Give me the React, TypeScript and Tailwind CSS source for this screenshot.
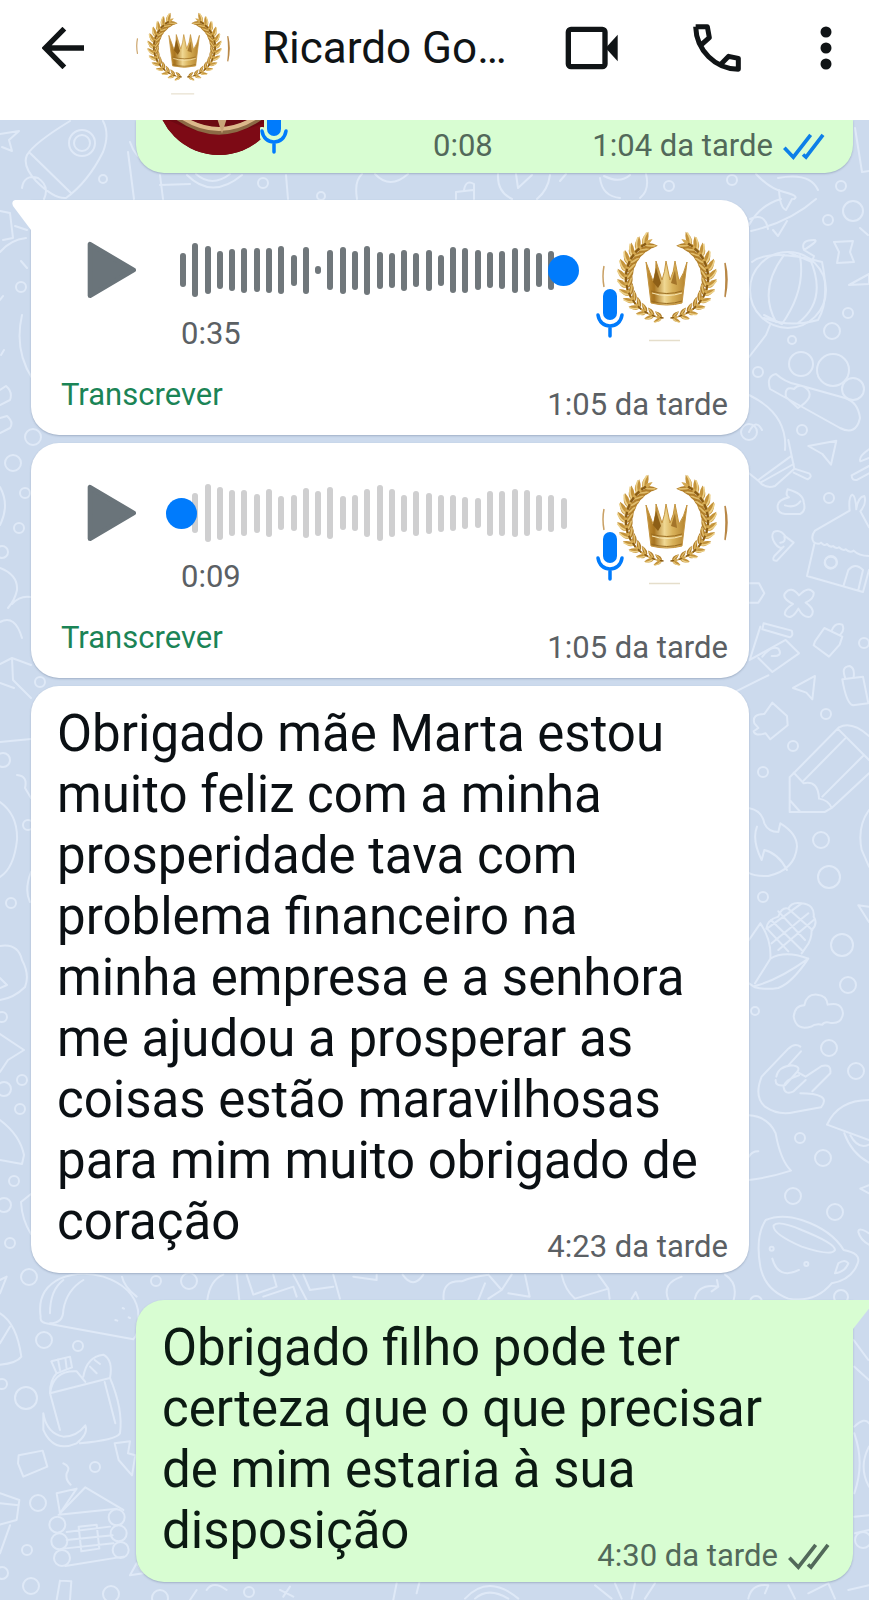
import React, { useId, useState } from "react";

const WAVE_ONE = [
  34, 54, 48, 38, 42, 45, 44, 45, 48, 31, 47, 8, 40, 47, 39, 49, 37, 35, 41, 34, 41, 31, 46, 45, 40,
  36, 38, 45, 44, 34, 39, 12,
];
const WAVE_TWO = [
  12, 40, 58, 53, 46, 46, 39, 48, 34, 36, 50, 45, 52, 34, 36, 48, 56, 48, 37, 45, 41, 37, 36, 32,
  30, 45, 45, 48, 46, 36, 37, 31,
];

// leaves of one wreath half, from the bottom up to the tip
const LEAVES = Array.from({ length: 13 }, (_, i) => {
  const degrees = 98 + i * 11.5;
  const angle = (degrees * Math.PI) / 180;
  return {
    x: 65 + 41 * Math.cos(angle),
    y: 62 + 40 * Math.sin(angle),
    turn: degrees + 90,
    size: 0.75 + Math.min(i, 8) * 0.05,
  };
});

const WreathHalf = () => (
  <g>
    {LEAVES.map((leaf, i) => (
      <g key={i} transform={`translate(${leaf.x} ${leaf.y}) rotate(${leaf.turn}) scale(${leaf.size})`}>
        <path d="M-1 0Q3 -6 12 0Q4 4 -1 0Z" transform="rotate(-38)" fill="#c4933a" />
        <path d="M-1 0Q3 6 12 0Q4 -4 -1 0Z" transform="rotate(38)" fill="#b27f2a" />
        <path d="M0 0Q4 -3 11 -1" transform="rotate(-38)" stroke="#ecd08a" strokeWidth="1.5" fill="none" />
        <path d="M1 0Q4 1 10 0" transform="rotate(38)" stroke="#e0bd6c" strokeWidth="1.5" fill="none" />
        <path d="M-2 0Q3 -3 9 0Q3 3 -2 0Z" fill="#d3a850" />
        <path d="M-3 0L2 0" stroke="#8a5c14" strokeWidth="2" fill="none" />
      </g>
    ))}
  </g>
);

const CrownAvatar = ({ className }: { className: string }) => {
  const id = useId();
  return (
    <svg viewBox="0 0 126 126" className={className} role="img" aria-label="Ricardo">
      <defs>
        <linearGradient id={id} x1="0" x2="1">
          <stop offset="0" stopColor="#c9973c" />
          <stop offset="0.2" stopColor="#a8741f" />
          <stop offset="0.45" stopColor="#f0d893" />
          <stop offset="0.65" stopColor="#d9b25a" />
          <stop offset="1" stopColor="#b17f2b" />
        </linearGradient>
      </defs>
      <circle cx="63" cy="63" r="63" fill="#fff" />
      <path d="M2 50Q0 60 2 71" stroke="#c9a064" strokeWidth="1.5" fill="none" />
      <path d="M123 47Q127 63 123 81Q125 63 123 47Z" stroke="#b88746" strokeWidth="1.5" fill="#b88746" />
      <path d="M47 124.500H78" stroke="#e5decb" strokeWidth="1.5" />
      <WreathHalf />
      <g transform="translate(130 0) scale(-1 1)">
        <WreathHalf />
      </g>
      <path
        d="M44 46L51 65Q54 58 54 45L60 64Q63 56 64 45L68 64Q72 56 73 45L77 65Q82 58 85 46L80 87Q65 91 49 87Z"
        fill={`url(#${id})`}
        stroke="#c3933f"
        strokeWidth="1"
      />
      <path d="M49 75Q65 80 80 75M49 85Q65 90 80 85" stroke="#9a6c20" strokeWidth="1" fill="none" />
      <path d="M50 77Q65 82 80 77" stroke="#f7e6b4" strokeWidth="1" fill="none" />
      <path d="M51 66L54 52L59 67L56 72Z" fill="#8d5f17" />
      <path d="M69 67L73 54L75 69Z" fill="#a4752a" />
    </svg>
  );
};

const RedAvatar = () => (
  <svg viewBox="0 0 126 126" className="h-[126px] w-[126px] shrink-0" aria-hidden="true">
    <defs>
      <clipPath id="red-round">
        <circle cx="63" cy="63" r="63" />
      </clipPath>
    </defs>
    <g clipPath="url(#red-round)">
      <rect width="126" height="126" fill="#6d0912" />
      <path d="M0 84Q63 124 126 84V126H0Z" fill="#7d0a15" />
      <path d="M12 80Q63 124 114 80" stroke="#8c6a45" strokeWidth="7" fill="none" />
      <path d="M12 78Q63 122 114 78" stroke="#dcb98b" strokeWidth="4" fill="none" />
      <path d="M57 70L66 98L75 70" stroke="#c9a578" strokeWidth="4" fill="none" />
    </g>
  </svg>
);

const MicBadge = ({ halo }: { halo: string }) => (
  <svg viewBox="0 0 28 50" className="h-[50px] w-[28px]" fill="none" aria-hidden="true">
    <g stroke={halo} strokeLinecap="round">
      <path d="M14 8V24" strokeWidth="20" />
      <path d="M2 26Q4 38 14 38Q24 38 26 26" strokeWidth="8" />
    </g>
    <rect x="7" y="0" width="14" height="31" rx="7" fill="#007bfc" />
    <path
      d="M2 26C3 33 8 37 14 37C20 37 25 33 26 26M14 37V47"
      stroke="#007bfc"
      strokeWidth="3.500"
      strokeLinecap="round"
    />
  </svg>
);

const Checks = ({ className }: { className: string }) => (
  <svg viewBox="0 0 126 80" className={className} fill="none" stroke="currentColor" strokeWidth="11" aria-hidden="true">
    <path d="M4 44L31 72L83 5M60 64L69 72L120 5" />
  </svg>
);

type VoiceProps = {
  bars: number[];
  duration: string;
  time: string;
  position: number;
  barColor: string;
  tail?: boolean;
};

const VoiceMessage = ({ bars, duration, time, position, barColor, tail }: VoiceProps) => {
  const [value, setValue] = useState(position);
  return (
    <article
      className={`relative ml-[31px] mr-[120px] bg-white pb-3 pl-[30px] pr-[21px] pt-4 shadow-[0_1px_2px_rgba(60,80,110,0.3)] ${
        tail ? "rounded-b-[28px] rounded-tr-[28px]" : "rounded-[28px]"
      }`}
    >
      {tail && (
        <svg viewBox="0 0 20 30" className="absolute -left-[19px] top-0 h-[30px] w-5" aria-hidden="true">
          <path d="M20 0H3Q-1 1 1 6L19 30H20Z" fill="#fff" />
        </svg>
      )}
      <div className="flex items-start">
        <button type="button" aria-label="Reproduzir" className="ml-[26px] mt-[25px] shrink-0">
          <svg viewBox="0 0 148 170" className="h-[58px] w-[50px]" aria-hidden="true">
            <path d="M9 9V161L138 85Z" fill="#6a747a" stroke="#6a747a" strokeWidth="14" strokeLinejoin="round" />
          </svg>
        </button>
        <div className="ml-[43px] mt-[25px] flex-1">
          <div className="relative">
            <div className="flex h-[58px] items-center justify-between">
              {bars.map((height, i) => (
                <span key={i} className={`w-[6px] rounded-full ${barColor}`} style={{ height }} />
              ))}
            </div>
            <input
              type="range"
              min={0}
              max={100}
              value={value}
              onChange={(e) => setValue(Number(e.target.value))}
              aria-label={`Posição da mensagem de voz ${duration}`}
              className="absolute -left-[14px] top-0 h-[58px] w-[calc(100%+26px)] appearance-none bg-transparent [&::-webkit-slider-thumb]:h-[31px] [&::-webkit-slider-thumb]:w-[31px] [&::-webkit-slider-thumb]:appearance-none [&::-webkit-slider-thumb]:rounded-full [&::-webkit-slider-thumb]:bg-[#007bfc]"
            />
          </div>
          <p className="mt-[17px] pl-px text-[31px] leading-9 text-[#5b6064]">{duration}</p>
        </div>
        <div className="relative ml-[35px] shrink-0">
          <CrownAvatar className="h-[126px] w-[126px]" />
          <div className="absolute -left-[6px] top-[73px]">
            <MicBadge halo="#fff" />
          </div>
        </div>
      </div>
      <div className="mt-[25px] flex items-start justify-between">
        <button type="button" className="text-[31px] leading-9 text-[#1b8456]">
          Transcrever
        </button>
        <time className="pt-[10px] text-[31px] leading-9 text-[#5b6064]">{time}</time>
      </div>
    </article>
  );
};

// x, y, radius of the small rings scattered over the wallpaper
const RINGS = [
  [103, 179, 4], [263, 183, 5], [82, 143, 13], [82, 143, 8], [669, 186, 5], [732, 180, 5], [841, 186, 5],
  [321, 196, 4], [21, 287, 5], [33, 437, 8], [13, 463, 8], [25, 493, 5], [19, 528, 5], [2, 552, 6],
  [828, 220, 5], [853, 211, 10], [848, 313, 5], [832, 331, 8], [792, 340, 4], [758, 372, 5], [802, 430, 5],
  [801, 364, 12], [833, 370, 16], [853, 389, 11], [749, 432, 8], [829, 498, 5], [831, 562, 6], [864, 643, 5],
  [826, 714, 5], [793, 746, 5], [763, 772, 5], [821, 840, 8], [829, 877, 11], [763, 897, 5], [842, 945, 11],
  [848, 985, 8], [755, 1011, 4], [829, 1048, 8], [856, 1071, 8], [800, 1138, 5], [823, 1158, 8],
  [793, 1196, 8], [835, 1212, 8], [841, 1297, 7], [756, 1302, 6], [40, 682, 5], [3, 760, 7], [28, 825, 5],
  [11, 903, 5], [2, 1017, 5], [22, 1080, 5], [4, 1089, 7], [20, 1109, 5], [14, 1181, 5], [4, 1205, 7],
  [10, 1243, 5], [29, 1277, 8], [156, 1281, 5], [189, 1281, 8], [44, 1340, 8], [78, 1346, 5], [26, 1398, 11],
  [95, 1467, 5], [38, 1503, 8], [27, 1550, 5], [31, 1586, 8], [249, 1592, 5], [111, 1594, 8], [160, 1598, 8],
  [2, 1573, 6], [2, 1384, 5], [863, 1540, 8],
];

const Wallpaper = () => (
  <svg
    viewBox="0 120 869 1480"
    preserveAspectRatio="xMinYMin slice"
    className="absolute inset-0 h-full w-full"
    fill="none"
    stroke="#dfe9f7"
    strokeWidth="2"
    strokeLinecap="round"
    strokeLinejoin="round"
    aria-hidden="true"
  >
    {RINGS.map(([x, y, r], i) => (
      <circle key={i} cx={x} cy={y} r={r} />
    ))}
    {/* top strip */}
    <path d="M0 134L19 131L9 140L12 151L2 147M70 121Q34 143 27 155Q22 166 36 181Q54 199 66 198Q88 182 103 152Q110 134 103 121M30 153L71 193M22 188Q24 174 38 178Q50 186 44 199M130 142Q135 158 150 165M128 152L134 199M160 175L163 199M160 185L190 184M187 175Q212 200 242 175M196 174Q212 188 230 174M286 175L288 199M357 199Q354 181 362 174M375 174Q390 190 408 174M456 199V192L473 190M464 190Q466 179 474 184V199M498 174Q497 192 512 199M550 175Q548 190 537 199M516 174L518 188L532 175M560 181L566 174M600 178Q602 196 620 198M646 174Q650 190 640 198M604 176Q620 184 630 175" />
    <path d="M756 174Q770 189 784 192Q800 196 794 199M778 178Q810 172 818 190M855 128L862 172L869 171M0 211L10 213L13 238L3 240M15 226L27 230M0 252Q10 240 26 238M21 261L27 268M22 315Q14 350 32 378M0 300L3 296M1 355L4 350M0 390L6 386Q13 392 10 400L0 405M0 418L7 416Q14 422 10 428L0 433" />
    {/* lantern and pencil case */}
    <path d="M749 225Q760 205 781 199M751 231Q790 222 816 199M750 219Q765 212 768 229M773 230L778 236L787 221M779 190Q780 208 786 210L792 199" />
    <circle cx="788" cy="290" r="38" />
    <path d="M752 262Q770 248 822 262Q830 300 818 320Q790 328 764 318M784 255Q758 290 776 322M800 256Q806 290 782 324M810 259Q828 300 798 323M788 252L812 262L814 256L804 250Q820 240 814 240Q800 240 804 250M764 315L782 324M770 325L766 335L749 357M834 242L853 241L850 252L854 262L837 263L839 252ZM860 228L868 235M849 285L869 274V284Z" />
    <path d="M776 374Q766 376 770 389L840 428Q856 436 860 418Q858 402 845 398L795 384Q785 382 776 374M798 408L786 397Q784 386 794 389Q800 382 808 390Q814 398 798 408M749 395Q788 414 785 450M749 432Q756 418 762 430" />
    <g transform="translate(735 440) scale(0.3333)" strokeWidth="6">
      <path d="M40 98L70 122Q90 148 120 138L178 86L160 0M70 120L166 50M80 126L176 72M178 86L222 100Q234 110 218 118L176 98M220 18L304 2L288 74L262 42ZM402 28Q370 50 376 64L402 54M402 78L350 106Q350 122 366 120L402 100" />
      <path d="M158 148Q150 166 162 172Q130 180 128 196Q126 220 150 222H196Q214 212 206 186Q204 160 158 148M150 196Q180 206 196 184" />
      <path d="M120 310Q106 290 116 276Q136 266 152 290L176 308L126 362Q108 364 118 348L146 320Q134 330 120 310ZM136 308Q154 306 148 290" />
      <path d="M344 212L240 272Q226 290 236 306Q250 316 258 308Q268 320 276 312Q286 324 294 318Q304 328 312 322Q324 334 332 328Q344 340 356 332Q372 348 402 348M344 212Q340 170 352 164Q362 168 364 208M364 206Q370 170 388 168Q396 190 376 214L402 262M238 312L216 408L384 456L402 390M326 436L340 390Q360 366 384 390L370 450" />
      <circle cx="287" cy="368" r="18" />
      <path d="M40 430H72L88 460L70 488H40M150 460Q168 436 192 466Q220 436 236 458Q238 476 212 488Q246 512 226 530Q206 536 190 506Q168 544 150 524Q146 510 174 492Q140 474 150 460Z" />
      <path d="M86 550L170 572Q176 588 164 592L82 568ZM76 560L44 660M44 660L152 600L192 640L112 696L70 654M0 756L100 706M82 650Q110 614 130 626Q146 650 110 648M240 604L268 564L322 590L314 614L282 650L236 616ZM290 572Q300 546 322 554Q330 570 316 584M174 744L240 708L232 778L214 758ZM322 718L384 710L400 790L354 796Q334 790 322 718ZM330 712Q318 680 344 678Q360 684 356 710" />
      <path d="M58 850Q50 822 88 822L112 788L156 828L158 856L106 898L92 880Q60 890 56 874L70 864ZM164 1116V1012L312 862Q350 842 402 888M176 998L206 1030Q250 1020 252 1076Q280 1080 290 1104L402 1000M164 1080L196 1116M164 1116H270L290 1104M330 896L206 1022M384 948L262 1070M308 866L402 960" />
      <path d="M40 1104Q80 1110 88 1150Q100 1176 130 1176L136 1150Q186 1180 186 1220Q180 1290 100 1308Q60 1310 40 1298M66 1160Q50 1200 80 1260L88 1230Q130 1240 156 1290M402 1110Q366 1160 380 1230L402 1280" />
    </g>
    <g transform="translate(735 850) scale(0.3333)" strokeWidth="6">
      <path d="M76 220Q110 270 106 326Q150 300 220 326Q170 400 130 414Q90 420 60 412L42 400M42 270L76 220M60 400L106 326M60 408Q130 390 220 326M94 236Q96 210 130 200Q140 170 160 176Q170 154 200 160Q240 164 236 200Q250 220 230 240Q230 270 214 290L200 310M130 184L210 270M108 210L200 300M96 236L160 304M236 210L130 300M220 190L110 280M160 176L232 240M200 160L96 236" />
      <path d="M208 466Q214 432 246 434Q276 436 278 464Q320 454 324 490Q320 524 284 518Q268 514 262 524Q240 520 228 530Q184 544 176 500Q180 466 208 466Z" />
      <path d="M196 590Q180 578 160 596L80 680Q56 740 90 770Q130 798 180 786L258 772Q276 750 258 740Q240 730 196 730M198 604L160 646M124 680Q130 650 170 646Q200 650 186 666L150 706Q120 710 122 690M186 666L212 680L260 648Q290 640 286 670L232 724M146 710Q150 690 192 676M146 712Q150 736 176 724L212 690" />
      <path d="M42 796Q100 800 122 850Q136 930 168 962Q100 984 42 990M42 920Q50 904 70 904M276 824Q310 750 402 750M276 824L402 870M328 850Q350 910 402 938M346 856Q370 900 402 884M370 166L402 216M370 166L402 170M376 1016L402 1006M376 1016L402 1030M402 1150Q370 1130 370 1146Q376 1170 402 1184" />
      <path d="M92 1110Q140 1090 200 1110Q290 1140 326 1200Q380 1210 368 1240Q350 1290 290 1300Q240 1360 160 1346Q90 1320 76 1250Q60 1160 92 1110ZM116 1126Q130 1110 200 1140Q300 1180 300 1200Q290 1220 200 1190Q110 1150 116 1126ZM112 1226Q130 1290 192 1260M300 1270L310 1240Q330 1226 340 1240Q330 1266 300 1270" />
      <circle cx="110" cy="1196" r="6" />
      <circle cx="214" cy="1242" r="6" />
    </g>
    {/* left edge */}
    <path d="M0 487Q10 505 0 525M0 568Q18 575 17 590Q15 600 8 608M12 604Q20 595 31 597M0 622Q15 614 22 638M0 664L12 658L31 665M12 658L13 680L31 698M0 683L14 688M0 742L31 739M17 775Q28 776 25 788L31 798M0 802Q18 815 17 840Q14 868 0 877M31 872Q24 890 30 902M0 946Q18 943 22 960Q30 975 25 987Q14 998 0 1000M0 978L7 985L0 988M0 1034L24 1050L8 1060L0 1072M0 1120Q20 1135 24 1155L22 1164L0 1160M31 1194L21 1202Q22 1220 31 1234" />
    <g transform="translate(0 1180) scale(0.3333)" strokeWidth="6">
      <path d="M122 410Q110 330 180 296Q240 270 310 290Q400 320 414 390Q420 460 400 478L150 432Q118 430 122 410M150 430Q190 430 190 390Q200 330 250 300M190 300Q150 330 150 400M366 290Q372 320 410 350M0 300L20 290L0 340M0 400Q50 430 64 530Q50 550 0 554M0 490L30 440" />
      <path d="M154 544L210 530L216 562L170 580ZM174 538L180 570M196 534L200 566M170 580Q150 600 150 640L330 594Q370 690 360 760Q350 780 240 790M150 640L180 750M250 590Q260 530 310 524Q340 540 330 594M150 640Q160 570 230 574L256 606M314 606L346 730M130 700Q140 760 190 770Q230 770 256 736Q266 760 230 790Q160 820 130 750ZM270 560L290 580M284 540L300 552" />
      <path d="M56 826L128 812L142 860L70 890L54 850ZM344 790L390 784L384 820L406 826L396 886L356 840ZM190 850Q214 860 200 880Q196 900 212 914M170 940L230 926L180 1000ZM180 1000L256 922L370 990M176 1004L350 986M200 1056L330 1040M200 1080L338 1066M196 1158L370 1130M190 1106L340 1090M236 1040L290 1034L298 1106L244 1114ZM0 940L58 960L50 1020L0 1034M0 970L56 976M30 1036L0 1120M390 1186L410 1150L430 1180ZM180 1202L214 1204L210 1260M180 1202L170 1260" />
      <circle cx="172" cy="1034" r="24" />
      <circle cx="350" cy="1012" r="24" />
      <circle cx="178" cy="1084" r="24" />
      <circle cx="356" cy="1060" r="24" />
      <circle cx="186" cy="1134" r="24" />
      <circle cx="362" cy="1110" r="24" />
      <path d="M346 420L352 422M368 384L372 386M386 412L390 414" />
      <path d="M622 360Q630 300 670 284M710 284L718 360M740 284L760 344L830 320L820 284M880 284L920 360M910 284L930 330L1000 320M1000 284L1020 356M1060 290L1130 300V284M1208 284Q1240 330 1270 284M620 1230Q640 1200 680 1230M590 1230L570 1260M1190 1210L1180 1260M1260 1200L1250 1240M840 1230L880 1250M850 1250L870 1220M790 350L880 320L890 350" />
    </g>
    <g transform="translate(435 1180) scale(0.3333)" strokeWidth="6">
      <path d="M26 360Q20 300 80 304Q110 290 160 284M130 360L150 310M160 284L200 330L230 284M200 330L160 356M270 284L284 350L220 340M380 284Q390 330 420 356L520 326L490 284M520 326L524 356M590 356L602 336L610 356M700 360Q680 310 740 290M780 356Q790 310 850 320L830 334M850 320L846 300M870 284Q910 310 896 360" />
      <path d="M1256 480L1300 540M1302 600L1258 560M1258 740Q1290 710 1302 730M1258 760Q1290 850 1258 940M1302 800Q1270 860 1302 920M1258 1010L1302 1006M1260 1060L1302 1050M90 1256Q160 1180 250 1256M120 1256Q160 1220 220 1256M480 1216L530 1256M540 1210L560 1256M600 1210L590 1256M660 1210L630 1256M940 1256Q950 1210 1000 1216L990 1240M1060 1216L1080 1256M1120 1240L1180 1210L1200 1256M1240 1230L1302 1216" />
    </g>
  </svg>
);

const App = () => {
  return (
    <div className="flex min-h-screen flex-col bg-white font-['Roboto',sans-serif]">
      {/* Header */}
      <header className="flex h-[120px] shrink-0 items-start pl-[42px] pr-[37px] text-[#101416]">
        <button type="button" aria-label="Voltar" className="mt-[27px] shrink-0">
          <svg viewBox="0 0 126 126" className="h-[42px] w-[42px]" fill="none" stroke="currentColor" strokeWidth="16" aria-hidden="true">
            <path d="M67 5L10 63L67 121M10 63H126" />
          </svg>
        </button>
        <CrownAvatar className="ml-[52px] mt-[1px] h-[94px] w-[94px] shrink-0" />
        <h1 className="ml-8 mt-5 min-w-0 truncate text-[44px] leading-[56px]">Ricardo Go…</h1>
        <div className="ml-auto flex shrink-0 items-start">
          <button type="button" aria-label="Videochamada" className="mt-[26px]">
            <svg viewBox="0 0 162 132" className="h-[44px] w-[54px]" aria-hidden="true">
              <rect x="10" y="10" width="110" height="112" rx="8" fill="none" stroke="currentColor" strokeWidth="16" />
              <path d="M122 66L158 26V106Z" fill="currentColor" />
            </svg>
          </button>
          <button type="button" aria-label="Chamada de voz" className="ml-[73px] mt-[23px]">
            <svg viewBox="0 0 150 150" className="h-[50px] w-[50px]" fill="none" stroke="currentColor" strokeWidth="15" strokeLinejoin="round" aria-hidden="true">
              <path d="M11 11H46L52 44L27 66M11 11C13 82 70 138 139 139V106L110 100L88 122" />
            </svg>
          </button>
          <button type="button" aria-label="Mais opções" className="ml-[78px] mt-[26px]">
            <svg viewBox="0 0 12 44" className="h-[44px] w-3" fill="currentColor" aria-hidden="true">
              <circle cx="6" cy="6" r="5.500" />
              <circle cx="6" cy="22" r="5.500" />
              <circle cx="6" cy="38" r="5.500" />
            </svg>
          </button>
        </div>
      </header>

      {/* Conversation */}
      <main className="relative flex-1 overflow-hidden bg-[#ccdaed] pb-[18px]">
        <Wallpaper />
        <article className="relative ml-[136px] mr-4 flex h-[53px] items-start rounded-b-[28px] bg-[#d8fdd2] pl-5 pr-7 shadow-[0_1px_2px_rgba(60,80,110,0.3)]">
          <div className="relative flex h-[35px] items-end">
            <div className="flex h-[35px] items-end overflow-hidden">
              <RedAvatar />
            </div>
            <div className="absolute bottom-0 left-[104px] flex h-[35px] items-end overflow-hidden">
              <MicBadge halo="#d8fdd2" />
            </div>
          </div>
          <div className="ml-[151px] mt-2 flex flex-1 items-center justify-between text-[31px] leading-9 text-[#52695a]">
            <span>0:08</span>
            <span className="flex items-center gap-[10px]">
              <time>1:04 da tarde</time>
              <Checks className="h-[27px] w-[42px] text-[#0d7fe8]" />
            </span>
          </div>
        </article>

        <div className="mt-[27px] flex flex-col gap-2">
          <VoiceMessage bars={WAVE_ONE} duration="0:35" time="1:05 da tarde" position={100} barColor="bg-[#70777b]" tail />
          <VoiceMessage bars={WAVE_TWO} duration="0:09" time="1:05 da tarde" position={0} barColor="bg-[#cfcfd0]" />
          <article className="relative ml-[31px] mr-[120px] rounded-[28px] bg-white pb-2 pl-[26px] pr-[21px] pt-[17px] shadow-[0_1px_2px_rgba(60,80,110,0.3)]">
            <p className="flow-root text-[51px] leading-[61px] text-[#0b1014]">
              Obrigado mãe Marta estou muito feliz com a minha prosperidade tava com problema financeiro na
              minha empresa e a senhora me ajudou a prosperar as coisas estão maravilhosas para mim muito
              obrigado de coração
              <time className="float-right mt-[38px] text-[31px] leading-9 text-[#5b6064]">4:23 da tarde</time>
            </p>
          </article>
        </div>

        <article className="relative ml-[136px] mr-4 mt-[27px] rounded-b-[28px] rounded-tl-[28px] bg-[#d8fdd2] pb-2 pl-[26px] pr-[23px] pt-[17px] shadow-[0_1px_2px_rgba(60,80,110,0.3)]">
          <svg viewBox="0 0 20 30" className="absolute -right-[19px] top-0 h-[30px] w-5" aria-hidden="true">
            <path d="M0 0H17Q21 1 19 6L1 29H0Z" fill="#d8fdd2" />
          </svg>
          <p className="flow-root text-[51px] leading-[61px] text-[#0b1a12]">
            Obrigado filho pode ter certeza que o que precisar de mim estaria à sua disposição
            <span className="float-right mt-[38px] flex items-center gap-[10px] text-[31px] leading-9 text-[#52695a]">
              <time>4:30 da tarde</time>
              <Checks className="h-[27px] w-[42px]" />
            </span>
          </p>
        </article>
      </main>
    </div>
  );
};

export default App;
